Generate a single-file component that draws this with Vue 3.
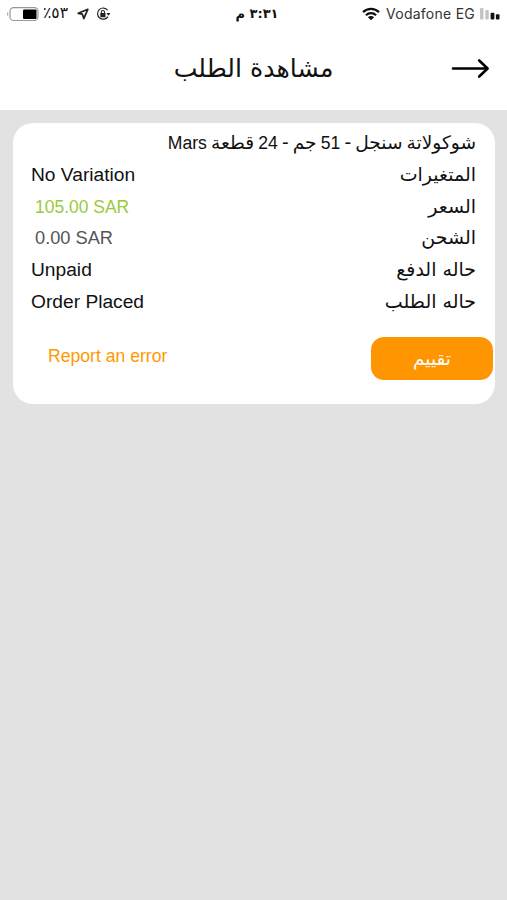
<script setup>
const rows = [
  { label: 'المتغيرات', value: 'No Variation', id: 'variation' },
  { label: 'السعر', value: '105.00 SAR', id: 'price' },
  { label: 'الشحن', value: '0.00 SAR', id: 'shipping' },
  { label: 'حاله الدفع', value: 'Unpaid', id: 'payment' },
  { label: 'حاله الطلب', value: 'Order Placed', id: 'status' },
]
</script>

<template>
  <div class="screen">
    <header class="top">
      <div class="status">
        <div class="status-left">
          <svg class="battery" width="33" height="16" viewBox="0 0 33 16">
            <path d="M2.2 5.8C.6 6.2.6 9.8 2.2 10.2Z" fill="#aaa" />
            <rect x="4" y="1.7" width="28" height="12.8" rx="3.6" fill="#fff" stroke="#999" stroke-width="1.2" />
            <rect x="17" y="3.4" width="13.5" height="9.6" rx="1" fill="#000" />
          </svg>
          <span class="percent"><bdi>٪٥٣</bdi></span>
          <svg class="nav" width="12" height="12" viewBox="0 0 12 12">
            <path d="M10.8 1.3 1.2 5.3 5.4 6.2 6.8 10.6Z" fill="none" stroke="#222" stroke-width="1.7" stroke-linejoin="round" />
          </svg>
          <svg class="lock" width="15" height="14" viewBox="0 0 15 14">
            <path d="M11.6 3.2A5.6 5.6 0 1 0 11.9 9.6" fill="none" stroke="#222" stroke-width="1.2" />
            <path d="M10.4 6h4l-2 2.7z" fill="#222" />
            <rect x="4.3" y="6" width="5.2" height="4.2" rx=".5" fill="#222" />
            <path d="M5.3 6.5V5.1a1.6 1.6 0 0 1 3.2 0v1.4" fill="none" stroke="#222" stroke-width="1.1" />
          </svg>
        </div>
        <div class="time" dir="rtl">٣:٣١ م</div>
        <div class="status-right">
          <svg class="wifi" width="18" height="14" viewBox="0 0 18 14">
            <g fill="none" stroke="#111" stroke-width="2.2">
              <path d="M1 5.1a11.5 11.5 0 0 1 16 0" />
              <path d="M3.9 8.2a7.3 7.3 0 0 1 10.2 0" />
            </g>
            <path d="M5.9 10.2a4.4 4.4 0 0 1 6.2 0L9 13.3z" fill="#111" />
          </svg>
          <span class="carrier">Vodafone EG</span>
          <svg class="signal" width="20" height="12" viewBox="0 0 20 12">
            <rect x="0" y="0" width="3.5" height="11.5" rx="1" fill="#c4c4c4" />
            <rect x="5.3" y="2" width="3.5" height="9.5" rx="1" fill="#c4c4c4" />
            <rect x="10.6" y="4.7" width="3.8" height="6.8" rx="1" fill="#111" />
            <rect x="15.9" y="6.3" width="3.6" height="5.2" rx="1" fill="#111" />
          </svg>
        </div>
      </div>
      <div class="titlebar">
        <h1 class="title" dir="rtl">مشاهدة الطلب</h1>
        <svg class="arrow" width="40" height="22" viewBox="0 0 40 22">
          <path d="M2 10.5H36M28.2 2.5 36.6 10.5 28.2 18.5" fill="none" stroke="#000" stroke-width="2.6" stroke-linecap="round" stroke-linejoin="round" />
        </svg>
      </div>
    </header>

    <main class="card">
      <div class="product" dir="rtl"><span class="product-name">شوكولاتة سنجل - <span class="num">51</span> جم - <span class="num">24</span> قطعة <span class="num">Mars</span></span></div>
      <div v-for="row in rows" :key="row.id" class="row">
        <span class="value" :class="row.id">{{ row.value }}</span>
        <span class="label" dir="rtl">{{ row.label }}</span>
      </div>
      <div class="actions">
        <a class="report">Report an error</a>
        <button class="rate" dir="rtl">تقييم</button>
      </div>
    </main>
  </div>
</template>

<style>
body {
  background: #e2e2e2;
}
</style>

<style scoped>
.screen {
  box-sizing: border-box;
  width: 507px;
  height: 900px;
  overflow: hidden;
  background: #e2e2e2;
  font-family: "Liberation Sans", "DejaVu Sans", sans-serif;
  color: #111;
}
.top {
  height: 110px;
  background: #fff;
}
.status {
  height: 27px;
  display: grid;
  grid-template-columns: 1fr 60px 1fr;
  align-items: center;
}
.status-left,
.status-right {
  display: flex;
  align-items: center;
}
.status-left {
  padding-left: 6px;
}
.percent {
  width: 26px;
  margin-left: 4px;
  font: 15.5px/27px "DejaVu Sans", sans-serif;
  white-space: nowrap;
}
.nav {
  margin-left: 8px;
}
.lock {
  margin-left: 7px;
}
.time {
  padding-left: 7px;
  text-align: center;
  white-space: nowrap;
  font: bold 13px/27px "DejaVu Sans", sans-serif;
}
.status-right {
  justify-content: flex-end;
  padding-right: 7px;
}
.carrier {
  margin: 0 5px 0 6px;
  font: 14px/27px Inter, sans-serif;
  letter-spacing: 0.25px;
  color: #333;
  white-space: nowrap;
}
.titlebar {
  height: 83px;
  display: grid;
  grid-template-columns: 56px 1fr 56px;
  align-items: center;
}
.title {
  grid-column: 2;
  margin: 0;
  text-align: center;
  font: 25.2px/40px "DejaVu Sans", sans-serif;
}
.card {
  box-sizing: border-box;
  width: 482px;
  height: 281px;
  margin: 13px 0 0 13px;
  padding-top: 4px;
  border-radius: 20px;
  background: #fff;
}
.product,
.row {
  height: 31.8px;
  line-height: 32px;
  padding: 0 19px 0 18px;
  white-space: nowrap;
}
.product-name,
.label {
  display: inline-block;
  font-family: "DejaVu Sans", sans-serif;
  font-size: 19px;
}
.label {
  line-height: 30px;
}
.product-name {
  font-size: 18.6px;
  word-spacing: -1.8px;
}
.num {
  font-family: "Liberation Sans", sans-serif;
  font-size: 17.6px;
}
.row {
  display: flex;
  justify-content: space-between;
}
.value {
  font-size: 19.2px;
  line-height: 31.5px;
  transform-origin: left center;
}
.price {
  margin-left: 4px;
  color: #9aca3c;
  transform: scaleX(0.91);
}
.shipping {
  margin-left: 4px;
  color: #555;
  transform: scaleX(0.95);
}
.actions {
  display: flex;
  justify-content: space-between;
  padding: 19px 2px 0 35px;
}
.report {
  font-size: 17.6px;
  line-height: 38px;
  color: #ff9800;
}
.rate {
  width: 122px;
  height: 43px;
  padding: 0;
  border: 0;
  border-radius: 13px;
  background: #ff9500;
  color: #fff;
  font: 18.5px/43px "DejaVu Sans", sans-serif;
}
</style>
